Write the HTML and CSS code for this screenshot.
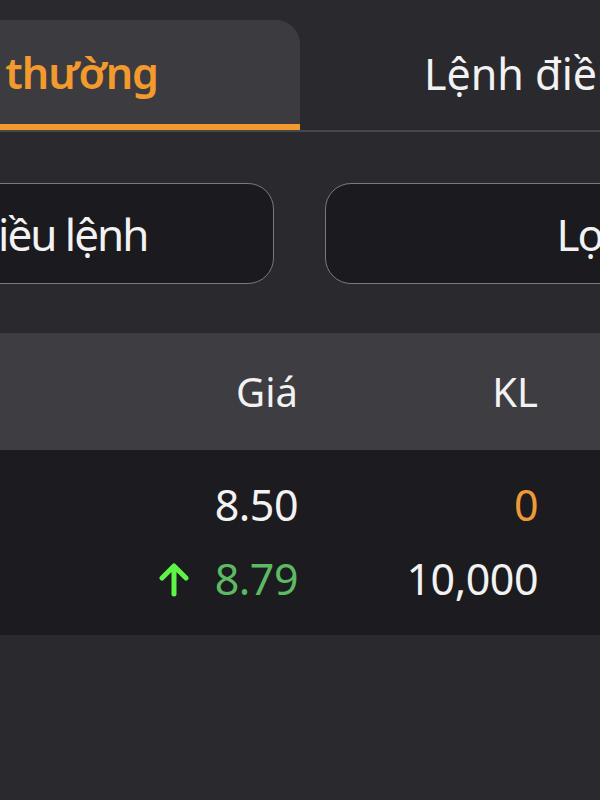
FILE: index.html
```html
<!DOCTYPE html>
<html lang="vi">
<head>
  <meta charset="UTF-8">
  <meta name="viewport" content="width=device-width, initial-scale=1.0">
  <title>Sổ lệnh</title>
  <link rel="stylesheet" href="styles.css">
</head>
<body>

  <div class="screen">
    <div class="tabs">
      <div class="tab active">Lệnh thường</div>
      <div class="tab">Lệnh điều kiện</div>
    </div>

    <div class="actions">
      <button class="action left">Nhiều lệnh</button>
      <button class="action right">Lọc</button>
    </div>

    <div class="table">
      <div class="row head">
        <div class="cell"></div>
        <div class="cell">Giá</div>
        <div class="cell">KL</div>
      </div>
      <div class="body">
        <div class="row">
          <div class="cell"></div>
          <div class="cell">8.50</div>
          <div class="cell orange">0</div>
        </div>
        <div class="row">
          <div class="cell"></div>
          <div class="cell green">
            <svg class="arrow" width="34" height="34" viewBox="0 0 34 34">
              <path d="M17 31V4M5 15L17 3L29 15" fill="none" stroke="#5df347" stroke-width="5" stroke-linecap="round" stroke-linejoin="round"/>
            </svg>
            8.79
          </div>
          <div class="cell">10,000</div>
        </div>
      </div>
    </div>
  </div>

</body>
</html>
```

FILE: styles.css
```css
html, body {
  margin: 0;
  padding: 0;
  background: #2a292e;
  overflow: hidden;
}

body {
  width: 600px;
  height: 800px;
  font-family: "Noto Sans", "Open Sans", sans-serif;
  color: #f2f2f2;
}

/* the page is a crop of a wider screen */
.screen {
  width: 1000px;
  margin-left: -200px;
}

.tabs {
  display: flex;
  padding-top: 20px;
  border-bottom: 2px solid #48474c;
}

.tab {
  height: 110px;
  box-sizing: border-box;
  display: flex;
  align-items: center;
  font-size: 43px;
}

.tab.active {
  width: 500px;
  justify-content: flex-end;
  padding-right: 142px;
  background: #3c3b40;
  border-radius: 24px 24px 0 0;
  border-bottom: 6px solid #f29a2e;
  color: #f29a2e;
  font-weight: 600;
  letter-spacing: -1px;
}

.tab:not(.active) {
  padding-left: 124px;
  padding-bottom: 4px;
}

.actions {
  display: flex;
  gap: 51px;
  margin-top: 51px;
}

.action {
  width: 475px;
  height: 101px;
  box-sizing: border-box;
  background: #1b1a1e;
  border: 1.5px solid #7a797e;
  border-radius: 26px;
  color: #f2f2f2;
  font-family: inherit;
  font-size: 44px;
  letter-spacing: -2px;
  display: flex;
  align-items: center;
  padding: 0;
}

.action.left {
  justify-content: flex-end;
  padding-right: 126px;
}

.action.right {
  padding-left: 230px;
}

.table {
  margin-top: 49px;
}

.row {
  display: grid;
  grid-template-columns: 1fr 240px 240px;
  padding-right: 262px;
  font-size: 43px;
  letter-spacing: -0.5px;
}

.row .cell {
  text-align: right;
}

.row.head {
  height: 117px;
  align-items: center;
  background: #3e3d42;
  font-size: 40px;
  letter-spacing: 0;
}

.body {
  background: #1c1b1f;
  padding: 18px 0 19px;
}

.body .row {
  line-height: 74px;
}

.green {
  color: #5cba62;
  display: flex;
  justify-content: flex-end;
  align-items: center;
  gap: 24px;
}

.orange {
  color: #ee9a36;
}

.arrow {
  display: block;
  margin-top: 2px;
}
```
